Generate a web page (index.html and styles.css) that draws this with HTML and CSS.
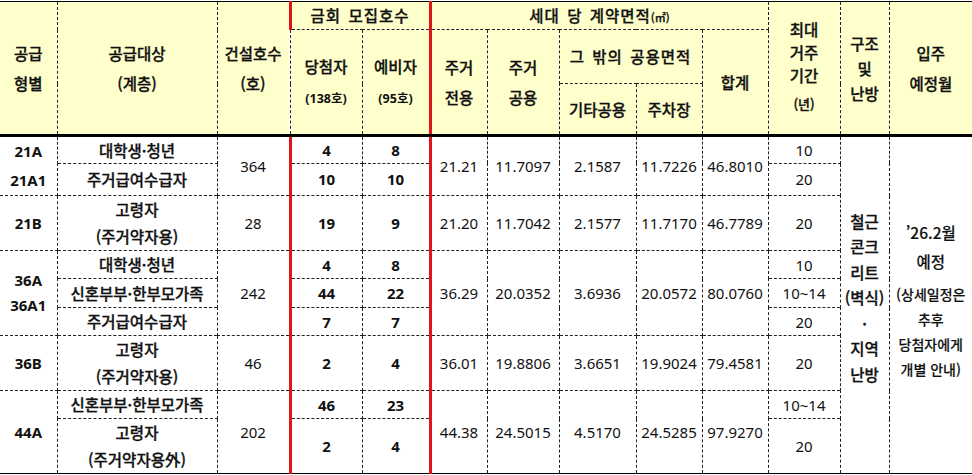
FILE: index.html
```html
<!DOCTYPE html>
<html lang="ko">
<head>
<meta charset="utf-8">
<title>공급 현황</title>
<link rel="stylesheet" href="styles.css">
</head>
<body>
<table class="supply">
  <colgroup>
    <col style="width:57px"><col style="width:160px"><col style="width:73px">
    <col style="width:72px"><col style="width:68px"><col style="width:57px">
    <col style="width:72px"><col style="width:77px"><col style="width:66px">
    <col style="width:66px"><col style="width:72px"><col style="width:49px">
    <col style="width:83px">
  </colgroup>
  <thead>
    <tr class="h1">
      <th rowspan="3" class="lh">공급<br>형별</th>
      <th rowspan="3" class="lh">공급대상<br>(계층)</th>
      <th rowspan="3" class="lh">건설호수<br>(호)</th>
      <th colspan="2" class="red-top red-l red-r wide">금회 모집호수</th>
      <th colspan="5" class="wide">세대 당 계약면적<span class="unit">(㎡)</span></th>
      <th rowspan="3" class="lh2">최대<br>거주<br>기간<br><span class="sub yr">(년)</span></th>
      <th rowspan="3" class="lh3">구조<br>및<br>난방</th>
      <th rowspan="3" class="lh noright">입주<br>예정월</th>
    </tr>
    <tr class="h2">
      <th rowspan="2" class="red-l lh"><span>당첨자</span><br><span class="sub b">(138호)</span></th>
      <th rowspan="2" class="red-r lh"><span>예비자</span><br><span class="sub b">(95호)</span></th>
      <th rowspan="2" class="lh">주거<br>전용</th>
      <th rowspan="2" class="lh">주거<br>공용</th>
      <th colspan="2" class="wide">그 밖의 공용면적</th>
      <th rowspan="2">합계</th>
    </tr>
    <tr class="h3">
      <th>기타공용</th>
      <th>주차장</th>
    </tr>
  </thead>
  <tbody>
    <tr class="r27">
      <td rowspan="2" class="type lt">21A<br>21A1</td>
      <td class="ko">대학생·청년</td>
      <td rowspan="2">364</td>
      <td class="red-l b">4</td>
      <td class="red-r b">8</td>
      <td rowspan="2">21.21</td>
      <td rowspan="2">11.7097</td>
      <td rowspan="2">2.1587</td>
      <td rowspan="2">11.7226</td>
      <td rowspan="2">46.8010</td>
      <td>10</td>
      <td rowspan="9" class="ko struct">철근<br>콘크<br>리트<br>(벽식)<br>·<br>지역<br>난방</td>
      <td rowspan="9" class="ko move noright"><span class="main">’26.2월<br>예정</span><br><span class="note">(상세일정은<br>추후<br>당첨자에게<br>개별 안내)</span></td>
    </tr>
    <tr class="r31">
      <td class="ko">주거급여수급자</td>
      <td class="red-l b">10</td>
      <td class="red-r b">10</td>
      <td>20</td>
    </tr>
    <tr class="r54">
      <td class="type">21B</td>
      <td class="ko lt2">고령자<br>(주거약자용)</td>
      <td>28</td>
      <td class="red-l b">19</td>
      <td class="red-r b">9</td>
      <td>21.20</td>
      <td>11.7042</td>
      <td>2.1577</td>
      <td>11.7170</td>
      <td>46.7789</td>
      <td>20</td>
    </tr>
    <tr class="r28">
      <td rowspan="3" class="type lt3">36A<br>36A1</td>
      <td class="ko">대학생·청년</td>
      <td rowspan="3">242</td>
      <td class="red-l b">4</td>
      <td class="red-r b">8</td>
      <td rowspan="3">36.29</td>
      <td rowspan="3">20.0352</td>
      <td rowspan="3">3.6936</td>
      <td rowspan="3">20.0572</td>
      <td rowspan="3">80.0760</td>
      <td>10</td>
    </tr>
    <tr class="r29">
      <td class="ko">신혼부부·한부모가족</td>
      <td class="red-l b">44</td>
      <td class="red-r b">22</td>
      <td>10~14</td>
    </tr>
    <tr class="r28">
      <td class="ko">주거급여수급자</td>
      <td class="red-l b">7</td>
      <td class="red-r b">7</td>
      <td>20</td>
    </tr>
    <tr class="r53">
      <td class="type">36B</td>
      <td class="ko lt2">고령자<br>(주거약자용)</td>
      <td>46</td>
      <td class="red-l b">2</td>
      <td class="red-r b">4</td>
      <td>36.01</td>
      <td>19.8806</td>
      <td>3.6651</td>
      <td>19.9024</td>
      <td>79.4581</td>
      <td>20</td>
    </tr>
    <tr class="r28">
      <td rowspan="2" class="type">44A</td>
      <td class="ko">신혼부부·한부모가족</td>
      <td rowspan="2">202</td>
      <td class="red-l b">46</td>
      <td class="red-r b">23</td>
      <td rowspan="2">44.38</td>
      <td rowspan="2">24.5015</td>
      <td rowspan="2">4.5170</td>
      <td rowspan="2">24.5285</td>
      <td rowspan="2">97.9270</td>
      <td>10~14</td>
    </tr>
    <tr class="r53 last">
      <td class="ko lt2">고령자<br>(주거약자용外)</td>
      <td class="red-l red-b b">2</td>
      <td class="red-r red-b b">4</td>
      <td>20</td>
    </tr>
  </tbody>
</table>
</body>
</html>
```

FILE: styles.css
```css
html, body {
  margin: 0;
  padding: 0;
  background: #fff;
}
body {
  padding-top: 1px;
  font-family: "Noto Sans", "Noto Sans CJK KR", sans-serif;
  color: #111;
}
.supply {
  width: 972px;
  table-layout: fixed;
  border-collapse: collapse;
  border-top: 1px solid #000;
  border-bottom: 1px solid #000;
  font-size: 15px;
}
.supply th, .supply td {
  padding: 0;
  text-align: center;
  vertical-align: middle;
  border: 1px dashed #222;
  line-height: 1.2;
  white-space: nowrap;
  overflow: hidden;
}
.supply th {
  background: #ffffcc;
  font-family: "Noto Sans CJK KR", sans-serif;
  font-weight: 500;
  font-size: 15.5px;
  color: #111;
  -webkit-text-stroke: 0.3px #111;
}
.supply td:first-child, .supply th:first-child { border-left: none; }
.supply .noright { border-right: none; }
.supply thead tr:last-child th,
.supply thead th[rowspan="3"],
.supply thead tr.h2 th[rowspan="2"] {
  border-bottom: 3px solid #000;
}
.supply tr.h1 th { border-top: 1px solid #000; }
.h1 { height: 28px; }
.h2 { height: 54px; }
.h3 { height: 52px; }
.r27 { height: 27px; }
.r28 { height: 28px; }
.r29 { height: 29px; }
.r31 { height: 31px; }
.r53 { height: 53px; }
.r54 { height: 54px; }
.supply .last td { border-bottom: 1px solid #000; }

.supply .wide { letter-spacing: 1px; word-spacing: 2px; }
.supply .lh { line-height: 30px; }
.supply .lh2 { line-height: 23px; }
.supply .lh3 { line-height: 25px; }
.supply .yr { display: inline-block; line-height: 30px; margin-top: 2px; }
.supply .unit { font-size: 11px; letter-spacing: 0; }
.supply .sub { font-size: 13px; }
.supply .sub.b { font-weight: 700; font-family: "Noto Sans", "Noto Sans CJK KR", sans-serif; -webkit-text-stroke: 0; font-size: 12.5px; }
.supply .b { font-weight: 700; }
.supply .type { font-weight: 700; }
.supply .lt { line-height: 29px; }
.supply .lt3 { line-height: 25px; }
.supply .lt2 { line-height: 27px; }
.supply .ko {
  font-family: "Noto Sans CJK KR", sans-serif;
  font-weight: 500;
  font-size: 15.5px;
  -webkit-text-stroke: 0.3px #111;
}
.supply .struct { line-height: 25.5px; padding-bottom: 14px; }
.supply .move { padding-bottom: 10px; -webkit-text-stroke: 0.15px #111; }
.supply .move .main { display: inline-block; font-size: 15.5px; line-height: 29px; margin-bottom: 6px; }
.supply .move .note { display: inline-block; font-size: 14px; line-height: 25px; }

.supply .red-l { border-left: 3px solid #e0141b; }
.supply .red-r { border-right: 3px solid #e0141b; }
.supply .red-top { border-top: 3px solid #e0141b; }
.supply .red-b { border-bottom: 3px solid #e0141b; }
```
